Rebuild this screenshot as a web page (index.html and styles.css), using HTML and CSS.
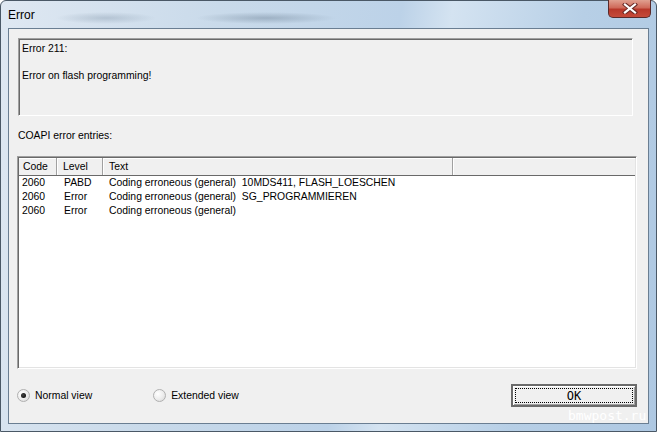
FILE: index.html
```html
<!DOCTYPE html>
<html>
<head>
<meta charset="utf-8">
<link rel="stylesheet" href="styles.css">
</head>
<body>
<div class="window">
  <div class="titlebar">
    <span class="title">Error</span>
    <div class="close">
      <svg width="16" height="11" viewBox="0 0 16 11">
        <path d="M3 1.5 L13 9.5 M13 1.5 L3 9.5" stroke="#6a2a26" stroke-width="4.2" stroke-linecap="square"/>
        <path d="M3 1.5 L13 9.5 M13 1.5 L3 9.5" stroke="#ffffff" stroke-width="2.2" stroke-linecap="square"/>
      </svg>
    </div>
  </div>
  <div class="client">
    <div class="msgbox">
      <p>Error 211:</p>
      <p>Error on flash programming!</p>
    </div>
    <div class="label">COAPI error entries:</div>
    <div class="list">
      <div class="header">
        <div class="hcell c-code">Code</div>
        <div class="hcell c-level">Level</div>
        <div class="hcell c-text">Text</div>
        <div class="hcell c-rest"></div>
      </div>
      <div class="rows">
        <div class="row"><span class="c-code">2060</span><span class="c-level">PABD</span><span class="c-text">Coding erroneous (general)  10MDS411, FLASH_LOESCHEN</span></div>
        <div class="row"><span class="c-code">2060</span><span class="c-level">Error</span><span class="c-text">Coding erroneous (general)  SG_PROGRAMMIEREN</span></div>
        <div class="row"><span class="c-code">2060</span><span class="c-level">Error</span><span class="c-text">Coding erroneous (general)</span></div>
      </div>
    </div>
    <div class="bottom">
      <label class="radio"><span class="dot checked"></span>Normal view</label>
      <label class="radio ext"><span class="dot"></span>Extended view</label>
      <div class="ok"><span>OK</span></div>
    </div>
  </div>
  <div class="watermark">bmwpost.ru</div>
</div>
</body>
</html>
```
FILE: styles.css
```css
* { box-sizing: border-box; }
html, body { margin: 0; padding: 0; }
body {
  width: 657px; height: 432px; overflow: hidden;
  font-family: "Liberation Sans", Arial, sans-serif;
  font-size: 10.4px; color: #000;
  background: #fff;
}
.window {
  position: relative;
  width: 657px; height: 432px;
  display: flex; flex-direction: column;
  padding: 0 7px 7px 7px;
  border: 1px solid #4a5866;
  border-radius: 6px 6px 0 0;
  background:
    radial-gradient(ellipse 50px 6px at 105px 17px, rgba(120,140,160,0.35), transparent),
    radial-gradient(ellipse 70px 6px at 265px 17px, rgba(110,130,150,0.45), transparent),
    linear-gradient(100deg, #dfe8f2 0%, #c9daea 30%, #bcd2e8 55%, #d4e3f1 62%, #b7cfe6 80%, #aec8e2 100%);
}
.titlebar {
  height: 27px; flex: none;
  display: flex; align-items: flex-start;
  position: relative;
}
.title {
  font-size: 12px; margin-top: 7px; color: #000;
  font-family: "Liberation Sans", Arial, sans-serif;
}
.close {
  position: absolute; right: -2px; top: -1px;
  width: 43px; height: 18px;
  border: 1px solid #5a2a2a; border-top: none;
  border-radius: 0 0 5px 5px;
  background: linear-gradient(#e0a090 0%, #cf6a5a 45%, #b8382a 55%, #c54a3a 100%);
  display: flex; align-items: center; justify-content: center;
}
.close svg { display: block; margin-top: -1px; }
.client {
  flex: 1;
  background: #f0f0f0;
  border: 1px solid #6a7e92;
  display: flex; flex-direction: column;
  padding: 9px 11px 0 8px;
}
.msgbox {
  margin-left: 1px; margin-right: 4px;
  height: 78px; flex: none;
  border-top: 1px solid #a0a0a0; border-left: 1px solid #a0a0a0;
  border-right: 1px solid #fff; border-bottom: 1px solid #fff;
  box-shadow: inset 1px 1px 0 #696969;
  padding: 3px 3px;
}
.msgbox p { margin: 0 0 13px 0; line-height: 14px; }
.label { margin-top: 13px; height: 27px; flex: none; line-height: 14px; margin-left: 1px; }
.list {
  height: 213px; flex: none;
  border-top: 1px solid #a0a0a0; border-left: 1px solid #a0a0a0;
  border-right: 1px solid #fff; border-bottom: 1px solid #fff;
  background: #fff;
  display: flex; flex-direction: column;
  box-shadow: inset 1px 1px 0 #696969, inset -1px -1px 0 #e3e3e3;
  padding: 1px;
}
.header {
  display: flex; height: 18px; flex: none;
  background: #f0f0f0;
  border-bottom: 1px solid #696969;
  box-shadow: inset 0 1px 0 #fff;
}
.hcell {
  line-height: 17px; padding-left: 6px;
  border-right: 1px solid #a0a0a0;
  box-shadow: 1px 0 0 #fff;
}
.header .c-code { width: 38px; padding-left: 4px; }
.header .c-level { width: 46px; }
.header .c-text { width: 350px; }
.header .c-rest { flex: 1; border-right: none; box-shadow: none; }
.row { display: flex; height: 14px; line-height: 14px; white-space: pre; }
.row .c-code { width: 42px; padding-left: 3px; }
.row .c-level { width: 45px; padding-left: 3px; }
.row .c-text { padding-left: 3px; }
.bottom {
  flex: 1;
  display: flex; align-items: flex-start;
  padding-top: 15px;
}
.radio { display: flex; align-items: center; margin-top: 5px; height: 13px; }
.radio.ext { margin-left: 61px; }
.dot {
  width: 13px; height: 13px; border-radius: 50%;
  margin-right: 5px;
  border: 1px solid #b0b0b0;
  background: radial-gradient(circle at 35% 35%, #ffffff, #ececec 55%, #d4d4d4);
  position: relative;
}
.dot.checked::after {
  content: ""; position: absolute; left: 3px; top: 3px;
  width: 5px; height: 5px; border-radius: 50%;
  background: radial-gradient(circle at 40% 40%, #444, #000);
}
.ok {
  margin-left: auto;
  width: 126px; height: 23px;
  border: 2px solid #6b6b6b;
  box-shadow: inset 1px 1px 0 #fff, inset -1px -1px 0 #a0a0a0;
  background: #f0f0f0;
  padding: 2px;
  display: flex;
}
.ok span {
  flex: 1; border: 1px dotted #000;
  display: flex; align-items: center; justify-content: center;
  font-family: "DejaVu Sans Mono", "Liberation Mono", monospace; font-size: 12px;
}
.watermark {
  position: absolute; left: 567px; top: 407px;
  font-family: "DejaVu Sans Mono", "Liberation Mono", monospace;
  font-size: 13px; color: #ffffff;
}
```
